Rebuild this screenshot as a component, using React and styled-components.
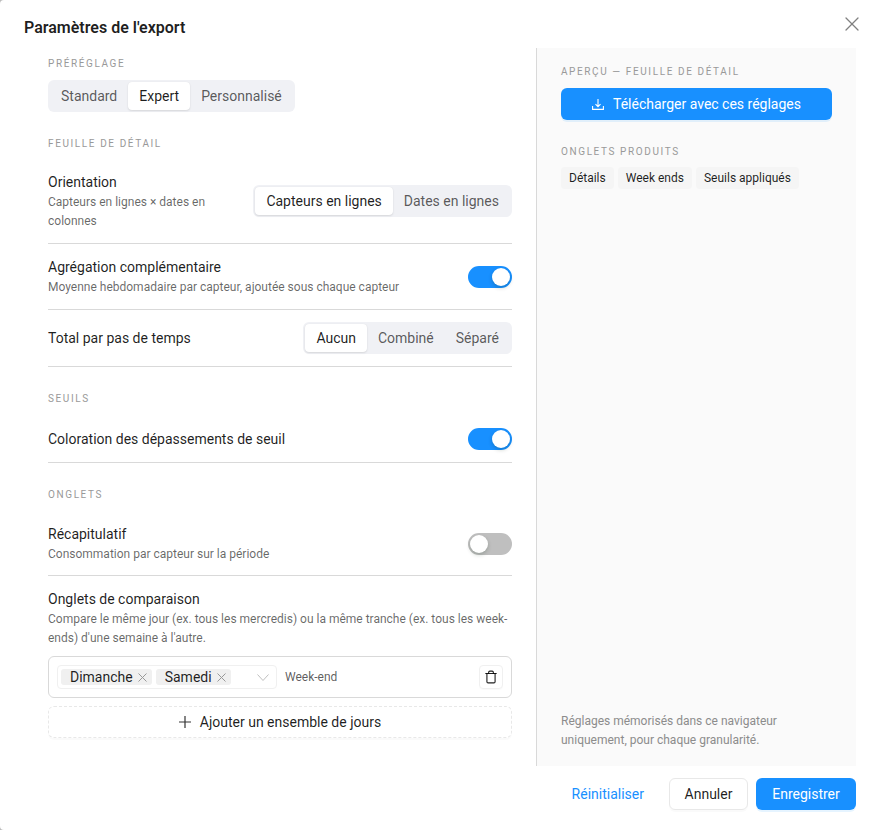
import React from 'react';
import styled, { createGlobalStyle } from 'styled-components';
import { Trash, X } from 'lucide-react';

const Global = createGlobalStyle`
  html, body { margin: 0; padding: 0; background: #bbb; }
  * { box-sizing: border-box; }
  body { font-family: Roboto, "Liberation Sans", sans-serif; }
`;

const Modal = styled.div`
  position: relative;
  width: 875px;
  height: 830px;
  background: #fff;
  border-radius: 4px 0 0 4px;
  overflow: hidden;
  display: flex;
  flex-direction: column;
  color: rgba(0, 0, 0, 0.88);
`;

const Title = styled.div`
  height: 48px;
  padding: 18px 24px 0;
  font-size: 16px;
  line-height: 20px;
  font-weight: 600;
`;

const Close = styled.button`
  position: absolute;
  top: 12px;
  right: 11px;
  width: 24px;
  height: 24px;
  padding: 0;
  border: 0;
  background: none;
  color: #808080;
  display: flex;
  align-items: center;
  justify-content: center;
`;

const Body = styled.div`
  display: flex;
  height: 718px;
`;

const Left = styled.div`
  flex: none;
  width: 464px;
  margin: 0 24px 0 48px;
`;

const Right = styled.div`
  width: 320px;
  flex: none;
  border-left: 1px solid #d9d9d9;
  background: #fafafa;
  padding: 16px 24px;
  display: flex;
  flex-direction: column;
`;

const Caption = styled.div`
  font-size: 10px;
  line-height: 16px;
  letter-spacing: 1.6px;
  color: #999;
  text-transform: uppercase;
  margin-top: ${p => p.$top ?? 24}px;
  margin-bottom: ${p => p.$bottom ?? 8}px;
`;

const Segmented = styled.div`
  display: inline-flex;
  flex: none;
  padding: 2px;
  border-radius: 6px;
  background: #f0f1f5;
`;

const Seg = styled.div`
  flex: none;
  height: 28px;
  padding: 0 11px;
  font-size: 14px;
  line-height: 28px;
  white-space: nowrap;
  border-radius: 4px;
  color: ${p => (p.$on ? 'rgba(0,0,0,0.88)' : 'rgba(0,0,0,0.65)')};
  background: ${p => (p.$on ? '#fff' : 'transparent')};
  box-shadow: ${p => (p.$on ? '0 1px 2px rgba(0,0,0,0.1), 0 0 1px rgba(0,0,0,0.08)' : 'none')};
`;

const Row = styled.div`
  display: flex;
  align-items: center;
  justify-content: space-between;
  height: ${p => p.$h}px;
  border-bottom: 1px solid #d9d9d9;
  gap: 16px;
`;

const RowText = styled.div`
  flex: ${p => (p.$narrow ? '0 0 189px' : '1')};
  padding-top: 1px;
`;

const Label = styled.div`
  font-size: 14px;
  line-height: 20px;
`;

const Hint = styled.div`
  padding-top: 1px;
  font-size: 12px;
  line-height: 19.2px;
  color: rgba(0, 0, 0, 0.6);
`;

const Toggle = styled.div`
  flex: none;
  position: relative;
  width: 44px;
  height: 22px;
  border-radius: 11px;
  background: ${p => (p.$on ? '#1890ff' : '#bfbfbf')};
`;

const Knob = styled.span`
  position: absolute;
  top: 2px;
  left: ${p => (p.$on ? '24px' : '2px')};
  width: 18px;
  height: 18px;
  border-radius: 50%;
  background: #fff;
  box-shadow: 0 2px 4px rgba(0, 35, 11, 0.2);
`;

const ComparisonBlock = styled.div`
  padding-top: 13px;
`;

const SetCard = styled.div`
  margin-top: 8px;
  height: 42px;
  border: 1px solid #d9d9d9;
  border-radius: 6px;
  padding: 0 8px;
  display: flex;
  align-items: center;
`;

const Select = styled.div`
  width: 220px;
  height: 24px;
  border: 1px solid #f0f0f0;
  border-radius: 4px;
  padding: 0 7px 0 3px;
  display: flex;
  align-items: center;
  gap: 4px;
`;

const Tag = styled.span`
  height: 16px;
  padding: 0 5px 0 9px;
  background: #f0f0f0;
  border-radius: 3px;
  font-size: 14px;
  line-height: 16px;
  display: inline-flex;
  align-items: center;
  gap: 5px;
`;

const TagClose = styled.svg`
  width: 9px;
  height: 9px;
  fill: none;
  stroke: #999;
  stroke-width: 1;
`;

const Arrow = styled.svg`
  margin-left: auto;
  width: 12px;
  height: 7px;
  fill: none;
  stroke: #bfbfbf;
  stroke-width: 1;
`;

const SetName = styled.div`
  flex: 1;
  margin-left: 8px;
  font-size: 12px;
  color: rgba(0, 0, 0, 0.65);
`;

const IconBtn = styled.div`
  width: 24px;
  height: 24px;
  border: 1px solid #f0f0f0;
  border-radius: 4px;
  box-shadow: 0 1px 0 rgba(0, 0, 0, 0.02);
  display: flex;
  align-items: center;
  justify-content: center;
`;

const AddBtn = styled.div`
  margin-top: 8px;
  height: 32px;
  border: 1px dashed #e8e8e8;
  border-radius: 6px;
  box-shadow: 0 2px 0 rgba(0, 0, 0, 0.02);
  display: flex;
  align-items: center;
  justify-content: center;
  gap: 9px;
  font-size: 14px;
`;

const AddIcon = styled.svg`
  width: 12px;
  height: 12px;
  fill: none;
  stroke: rgba(0, 0, 0, 0.8);
  stroke-width: 1.2;
`;

const Primary = styled.div`
  height: 32px;
  border-radius: 6px;
  background: #1890ff;
  box-shadow: 0 2px 0 rgba(5, 145, 255, 0.1);
  color: #fff;
  font-size: 14px;
  display: flex;
  align-items: center;
  justify-content: center;
  gap: 9px;
`;

const DownloadIcon = styled.svg`
  width: 12px;
  height: 11px;
  fill: none;
  stroke: #fff;
  stroke-width: 1.1;
`;

const Chips = styled.div`
  display: flex;
  gap: 4px;
`;

const Chip = styled.span`
  height: 22px;
  padding: 0 8px;
  line-height: 22px;
  border-radius: 4px;
  background: #f5f5f5;
  font-size: 12px;
`;

const Note = styled.div`
  margin-top: auto;
  font-size: 12px;
  line-height: 19px;
  color: #8c8c8c;
`;

const Footer = styled.div`
  flex: 1;
  display: flex;
  align-items: flex-start;
  justify-content: flex-end;
  padding: 12px 19px 0 0;
  gap: 8px;
`;

const LinkBtn = styled.div`
  padding: 0 17px 0 16px;
  line-height: 32px;
  color: #1890ff;
  font-size: 14px;
`;

const Cancel = styled.div`
  width: 79px;
  height: 32px;
  border: 1px solid #e8e8e8;
  border-radius: 6px;
  box-shadow: 0 2px 0 rgba(0, 0, 0, 0.02);
  font-size: 14px;
  display: flex;
  align-items: center;
  justify-content: center;
`;

const Save = styled(Primary)`
  width: 100px;
`;

const Options = ({ items, active }) => (
  <Segmented>
    {items.map(item => <Seg key={item} $on={item === active}>{item}</Seg>)}
  </Segmented>
);

const Switch = ({ on }) => <Toggle $on={on}><Knob $on={on} /></Toggle>;

const DayTag = ({ children }) => (
  <Tag>
    {children}
    <TagClose viewBox="0 0 9 9"><path d="M.5.5l8 8M8.5.5l-8 8" /></TagClose>
  </Tag>
);

const App = () => (
  <Modal>
    <Global />
    <Title>Paramètres de l'export</Title>
    <Close><X size={24} strokeWidth={1.3} /></Close>
    <Body>
      <Left>
        <Caption $top={8}>Préréglage</Caption>
        <Options items={['Standard', 'Expert', 'Personnalisé']} active="Expert" />
        <Caption $bottom={7}>Feuille de détail</Caption>
        <Row $h={85}>
          <RowText $narrow>
            <Label>Orientation</Label>
            <Hint>Capteurs en lignes × dates en colonnes</Hint>
          </RowText>
          <Options items={['Capteurs en lignes', 'Dates en lignes']} active="Capteurs en lignes" />
        </Row>
        <Row $h={66}>
          <RowText>
            <Label>Agrégation complémentaire</Label>
            <Hint>Moyenne hebdomadaire par capteur, ajoutée sous chaque capteur</Hint>
          </RowText>
          <Switch on />
        </Row>
        <Row $h={57}>
          <Label>Total par pas de temps</Label>
          <Options items={['Aucun', 'Combiné', 'Séparé']} active="Aucun" />
        </Row>
        <Caption>Seuils</Caption>
        <Row $h={48}>
          <Label>Coloration des dépassements de seuil</Label>
          <Switch on />
        </Row>
        <Caption $bottom={9}>Onglets</Caption>
        <Row $h={64}>
          <RowText>
            <Label>Récapitulatif</Label>
            <Hint>Consommation par capteur sur la période</Hint>
          </RowText>
          <Switch />
        </Row>
        <ComparisonBlock>
          <Label>Onglets de comparaison</Label>
          <Hint>Compare le même jour (ex. tous les mercredis) ou la même tranche (ex. tous les week-ends) d'une semaine à l'autre.</Hint>
          <SetCard>
            <Select>
              <DayTag>Dimanche</DayTag>
              <DayTag>Samedi</DayTag>
              <Arrow viewBox="0 0 12 7"><path d="M.5.5L6 6.5 11.5.5" /></Arrow>
            </Select>
            <SetName>Week-end</SetName>
            <IconBtn><Trash size={14} strokeWidth={1.9} /></IconBtn>
          </SetCard>
          <AddBtn>
            <AddIcon viewBox="0 0 12 12"><path d="M6 0v12M0 6h12" /></AddIcon>
            Ajouter un ensemble de jours
          </AddBtn>
        </ComparisonBlock>
      </Left>
      <Right>
        <Caption $top={0}>Aperçu — feuille de détail</Caption>
        <Primary>
          <DownloadIcon viewBox="0 0 12 11"><path d="M6 0v7.5M3.5 5.2L6 7.7l2.5-2.5M.6 7v3.4h10.8V7" /></DownloadIcon>
          Télécharger avec ces réglages
        </Primary>
        <Caption $bottom={7}>Onglets produits</Caption>
        <Chips>
          <Chip>Détails</Chip>
          <Chip>Week ends</Chip>
          <Chip>Seuils appliqués</Chip>
        </Chips>
        <Note>Réglages mémorisés dans ce navigateur uniquement, pour chaque granularité.</Note>
      </Right>
    </Body>
    <Footer>
      <LinkBtn>Réinitialiser</LinkBtn>
      <Cancel>Annuler</Cancel>
      <Save>Enregistrer</Save>
    </Footer>
  </Modal>
);

export default App;
